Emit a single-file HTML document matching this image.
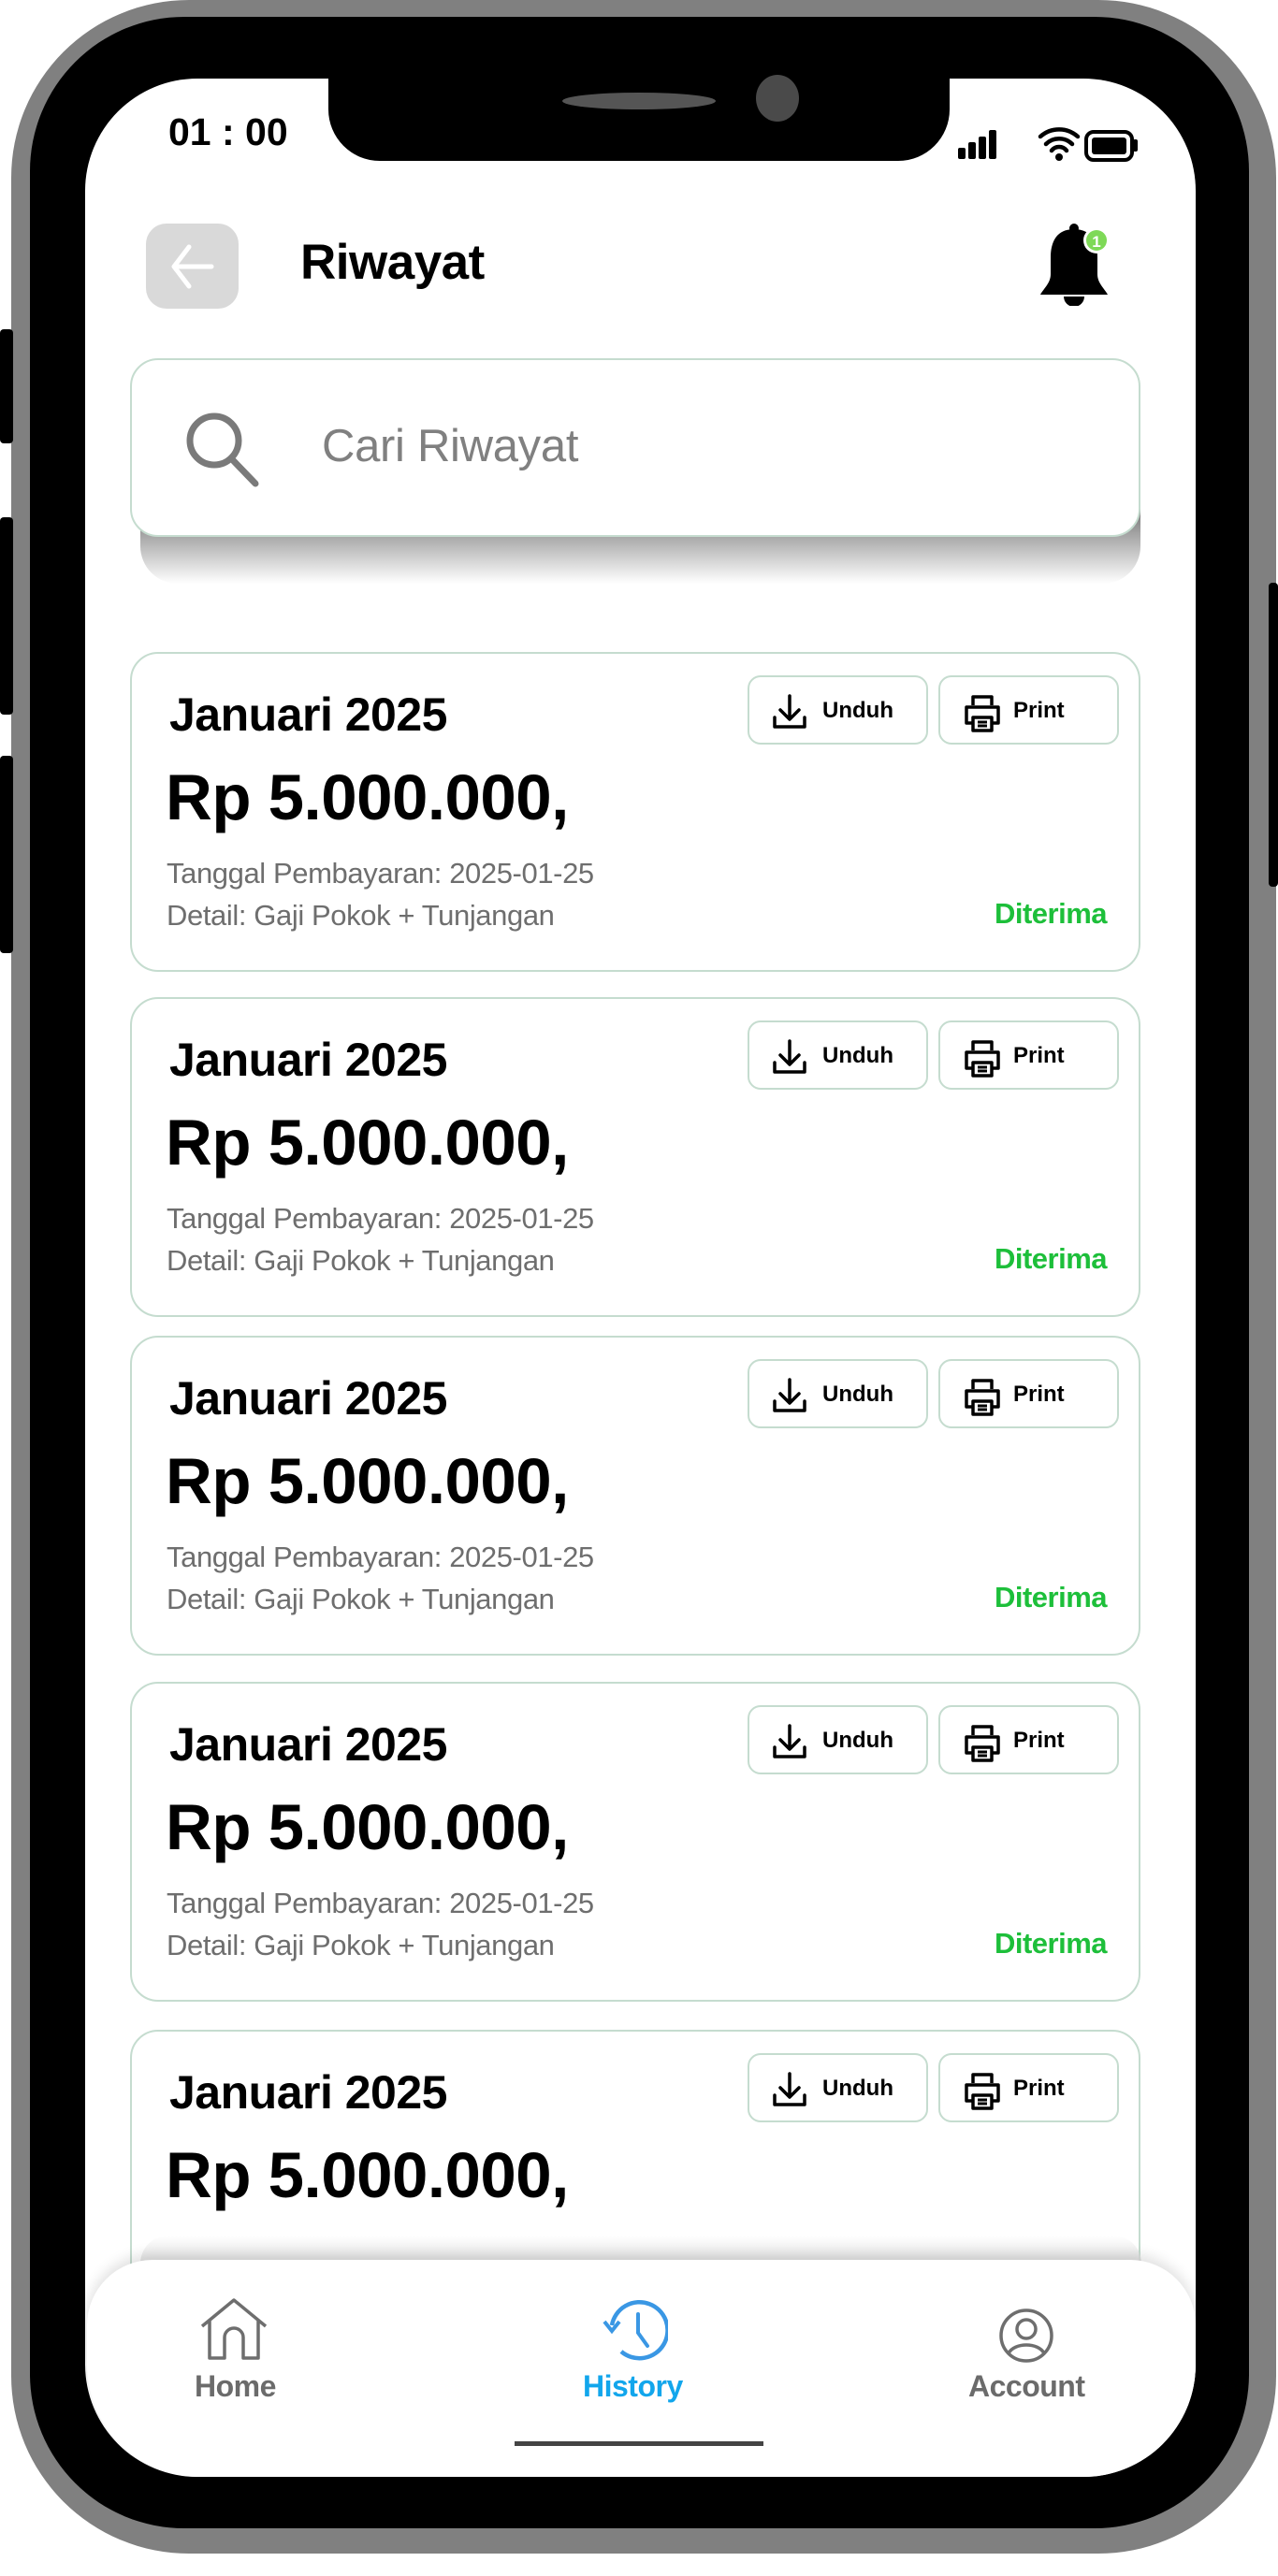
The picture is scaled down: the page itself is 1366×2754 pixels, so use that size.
<!DOCTYPE html>
<html><head><meta charset="utf-8"><style>
*{margin:0;padding:0;box-sizing:border-box}
body{width:1366px;height:2754px;background:#fff;position:relative;overflow:hidden;font-family:"Liberation Sans",sans-serif}
.abs{position:absolute}
.card{position:absolute;left:139px;width:1080px;height:342px;border:2.5px solid #c5dccf;border-radius:30px;background:#fff}
.card .t{position:absolute;left:40px;top:36px;font-size:50px;font-weight:bold;letter-spacing:-0.5px;color:#000}
.card .amt{position:absolute;left:36px;top:114px;font-size:69px;font-weight:bold;letter-spacing:-0.5px;color:#000}
.card .d1,.card .d2{position:absolute;left:37px;font-size:31px;color:#6e6e6e;letter-spacing:-0.4px}
.card .d1{top:217px}.card .d2{top:262px}
.card .st{position:absolute;right:34px;top:260px;font-size:31px;font-weight:bold;color:#1dbf3a;letter-spacing:-0.5px}
.btn{position:absolute;top:23px;width:193px;height:74px;border:2.5px solid #c5dccf;border-radius:14px;background:#fff}
.btn span{position:absolute;left:78px;top:22px;font-size:24px;font-weight:bold;color:#000}
.btn svg{position:absolute;left:24px;top:17px}
</style></head><body>
<div class="abs" style="left:12px;top:0;width:1352px;height:2730px;background:#808080;border-radius:190px"></div>
<div class="abs" style="left:0;top:352px;width:14px;height:122px;background:#000;border-radius:4px"></div>
<div class="abs" style="left:0;top:553px;width:14px;height:211px;background:#000;border-radius:4px"></div>
<div class="abs" style="left:0;top:808px;width:14px;height:211px;background:#000;border-radius:4px"></div>
<div class="abs" style="left:1356px;top:623px;width:10px;height:325px;background:#000;border-radius:4px"></div>
<div class="abs" style="left:32px;top:18px;width:1303px;height:2685px;background:#000;border-radius:165px"></div>
<div class="abs" style="left:91px;top:84px;width:1187px;height:2564px;background:#fff;border-radius:120px;overflow:hidden"></div>
<div class="abs" style="left:351px;top:70px;width:664px;height:102px;background:#000;border-radius:0 0 55px 55px"></div>
<div class="abs" style="left:601px;top:99px;width:164px;height:18px;background:#555;border-radius:50%"></div>
<div class="abs" style="left:808px;top:80px;width:46px;height:50px;background:#4a4a4a;border-radius:50%"></div>
<div class="abs" style="left:180px;top:118px;font-size:41px;font-weight:bold;color:#000;letter-spacing:0px">01 : 00</div>
<svg class="abs" style="left:1020px;top:135px" width="200" height="40" viewBox="0 0 200 40">
<rect x="4" y="23" width="8" height="12" rx="2"/><rect x="15" y="17" width="8" height="18" rx="2"/><rect x="26" y="11" width="8" height="24" rx="2"/><rect x="37" y="4" width="8" height="31" rx="2"/>
<g fill="none" stroke="#000" stroke-width="4.5" stroke-linecap="round"><path d="M92 11a30 30 0 0 1 40 0"/><path d="M98 19a20 20 0 0 1 28 0"/><path d="M104 26a10 10 0 0 1 16 0"/></g>
<circle cx="112" cy="33" r="4"/>
<rect x="141" y="6" width="49" height="30" rx="8" fill="none" stroke="#000" stroke-width="4"/><rect x="147" y="12" width="37" height="18" rx="3"/><rect x="191" y="14" width="5" height="13" rx="2"/>
</svg>
<div class="abs" style="left:156px;top:239px;width:99px;height:91px;background:#d9d9d9;border-radius:22px"></div>
<svg class="abs" style="left:180px;top:258px" width="50" height="54" viewBox="0 0 50 54"><path d="M22 6L6 27L22 48M6 27H46" fill="none" stroke="#fff" stroke-width="5" stroke-linecap="round" stroke-linejoin="round"/></svg>
<div class="abs" style="left:321px;top:250px;font-size:53px;font-weight:bold;letter-spacing:-0.5px">Riwayat</div>
<svg class="abs" style="left:1110px;top:235px" width="90" height="92" viewBox="0 0 90 92">
<circle cx="38" cy="9" r="5"/><path d="M38 10c-19 0-25 14-25 30v18c0 10-8 16-11 22h72c-3-6-11-12-11-22V40c0-16-6-30-25-30z"/><path d="M27 82a11 11 0 0 0 22 0z"/>
<circle cx="62" cy="22" r="14" fill="#fff"/><circle cx="62" cy="22" r="11" fill="#7ed957"/><text x="62" y="29" font-size="17" font-weight="bold" fill="#fff" text-anchor="middle" font-family="Liberation Sans">1</text>
</svg>
<div class="abs" style="left:150px;top:540px;width:1069px;height:84px;background:linear-gradient(#6f6f6f,#fff);border-radius:0 0 40px 40px"></div>
<div class="abs" style="left:139px;top:383px;width:1080px;height:191px;background:#fff;border:2.5px solid #c5dccf;border-radius:30px"></div>
<svg class="abs" style="left:195px;top:437px" width="86" height="86" viewBox="0 0 86 86"><circle cx="34" cy="34" r="26" fill="none" stroke="#7a7a7a" stroke-width="7"/><path d="M53 54L78 80" stroke="#7a7a7a" stroke-width="7" stroke-linecap="round"/></svg>
<div class="abs" style="left:344px;top:449px;font-size:49px;color:#808080;letter-spacing:-0.3px">Cari Riwayat</div>
<div class="card" style="top:697px"><div class="t">Januari 2025</div><div class="amt">Rp 5.000.000,</div><div class="d1">Tanggal Pembayaran: 2025-01-25</div><div class="d2">Detail: Gaji Pokok + Tunjangan</div><div class="st">Diterima</div>
<div class="btn" style="left:658px"><svg width="38" height="40" viewBox="0 0 38 40"><path d="M19 3v24M9 18l10 10 10-10M3 26v10h32V26" fill="none" stroke="#000" stroke-width="3.5" stroke-linecap="round" stroke-linejoin="round"/></svg><span>Unduh</span></div>
<div class="btn" style="left:862px"><svg width="42" height="44" viewBox="0 0 42 44"><path d="M11 13V4h20v9M11 32H4V15h34v17h-7M11 26h20v14H11z" fill="none" stroke="#000" stroke-width="3.5" stroke-linejoin="round"/><path d="M16 31h10M16 35h10" stroke="#000" stroke-width="3"/></svg><span>Print</span></div></div>
<div class="card" style="top:1066px"><div class="t">Januari 2025</div><div class="amt">Rp 5.000.000,</div><div class="d1">Tanggal Pembayaran: 2025-01-25</div><div class="d2">Detail: Gaji Pokok + Tunjangan</div><div class="st">Diterima</div>
<div class="btn" style="left:658px"><svg width="38" height="40" viewBox="0 0 38 40"><path d="M19 3v24M9 18l10 10 10-10M3 26v10h32V26" fill="none" stroke="#000" stroke-width="3.5" stroke-linecap="round" stroke-linejoin="round"/></svg><span>Unduh</span></div>
<div class="btn" style="left:862px"><svg width="42" height="44" viewBox="0 0 42 44"><path d="M11 13V4h20v9M11 32H4V15h34v17h-7M11 26h20v14H11z" fill="none" stroke="#000" stroke-width="3.5" stroke-linejoin="round"/><path d="M16 31h10M16 35h10" stroke="#000" stroke-width="3"/></svg><span>Print</span></div></div>
<div class="card" style="top:1428px"><div class="t">Januari 2025</div><div class="amt">Rp 5.000.000,</div><div class="d1">Tanggal Pembayaran: 2025-01-25</div><div class="d2">Detail: Gaji Pokok + Tunjangan</div><div class="st">Diterima</div>
<div class="btn" style="left:658px"><svg width="38" height="40" viewBox="0 0 38 40"><path d="M19 3v24M9 18l10 10 10-10M3 26v10h32V26" fill="none" stroke="#000" stroke-width="3.5" stroke-linecap="round" stroke-linejoin="round"/></svg><span>Unduh</span></div>
<div class="btn" style="left:862px"><svg width="42" height="44" viewBox="0 0 42 44"><path d="M11 13V4h20v9M11 32H4V15h34v17h-7M11 26h20v14H11z" fill="none" stroke="#000" stroke-width="3.5" stroke-linejoin="round"/><path d="M16 31h10M16 35h10" stroke="#000" stroke-width="3"/></svg><span>Print</span></div></div>
<div class="card" style="top:1798px"><div class="t">Januari 2025</div><div class="amt">Rp 5.000.000,</div><div class="d1">Tanggal Pembayaran: 2025-01-25</div><div class="d2">Detail: Gaji Pokok + Tunjangan</div><div class="st">Diterima</div>
<div class="btn" style="left:658px"><svg width="38" height="40" viewBox="0 0 38 40"><path d="M19 3v24M9 18l10 10 10-10M3 26v10h32V26" fill="none" stroke="#000" stroke-width="3.5" stroke-linecap="round" stroke-linejoin="round"/></svg><span>Unduh</span></div>
<div class="btn" style="left:862px"><svg width="42" height="44" viewBox="0 0 42 44"><path d="M11 13V4h20v9M11 32H4V15h34v17h-7M11 26h20v14H11z" fill="none" stroke="#000" stroke-width="3.5" stroke-linejoin="round"/><path d="M16 31h10M16 35h10" stroke="#000" stroke-width="3"/></svg><span>Print</span></div></div>
<div class="card" style="top:2170px;height:420px"><div class="t">Januari 2025</div><div class="amt">Rp 5.000.000,</div>
<div class="btn" style="left:658px"><svg width="38" height="40" viewBox="0 0 38 40"><path d="M19 3v24M9 18l10 10 10-10M3 26v10h32V26" fill="none" stroke="#000" stroke-width="3.5" stroke-linecap="round" stroke-linejoin="round"/></svg><span>Unduh</span></div>
<div class="btn" style="left:862px"><svg width="42" height="44" viewBox="0 0 42 44"><path d="M11 13V4h20v9M11 32H4V15h34v17h-7M11 26h20v14H11z" fill="none" stroke="#000" stroke-width="3.5" stroke-linejoin="round"/><path d="M16 31h10M16 35h10" stroke="#000" stroke-width="3"/></svg><span>Print</span></div></div>
<div class="abs" style="left:150px;top:2390px;width:1070px;height:30px;background:linear-gradient(#fff0,#e4e4e4);border-radius:30px 30px 0 0"></div>
<div class="abs" style="left:93px;top:2416px;width:1185px;height:232px;background:#fff;border-radius:70px 70px 120px 120px;box-shadow:0 -6px 14px rgba(0,0,0,0.12)"></div>
<svg class="abs" style="left:212px;top:2455px" width="76" height="70" viewBox="0 0 76 70"><path d="M4 32L38 4l34 28M12 25v41h16V44a10 10 0 0 1 20 0v22h16V25" fill="none" stroke="#6e6e6e" stroke-width="3.5" stroke-linejoin="round"/></svg>
<div class="abs" style="left:208px;top:2533px;font-size:32px;font-weight:bold;color:#6b6b6b;letter-spacing:-0.5px">Home</div>
<svg class="abs" style="left:642px;top:2458px" width="72" height="68" viewBox="0 0 72 68"><path d="M12 28A30 30 0 1 1 22 56" fill="none" stroke="#3a97e4" stroke-width="4.5"/><path d="M4 24l8 10 8-10" fill="none" stroke="#3a97e4" stroke-width="4"/><path d="M40 16v20l10 14" fill="none" stroke="#3a97e4" stroke-width="4" stroke-linecap="round"/></svg>
<div class="abs" style="left:623px;top:2533px;font-size:32px;font-weight:bold;color:#12a6ec;letter-spacing:-0.5px">History</div>
<svg class="abs" style="left:1066px;top:2466px" width="62" height="62" viewBox="0 0 62 62"><circle cx="31" cy="31" r="27" fill="none" stroke="#6e6e6e" stroke-width="3.5"/><circle cx="31" cy="24" r="10" fill="none" stroke="#6e6e6e" stroke-width="3.5"/><path d="M12 50c6-12 32-12 38 0" fill="none" stroke="#6e6e6e" stroke-width="3.5"/></svg>
<div class="abs" style="left:1035px;top:2533px;font-size:32px;font-weight:bold;color:#6b6b6b;letter-spacing:-0.5px">Account</div>
<div class="abs" style="left:550px;top:2610px;width:266px;height:5px;background:#444"></div>
</body></html>
